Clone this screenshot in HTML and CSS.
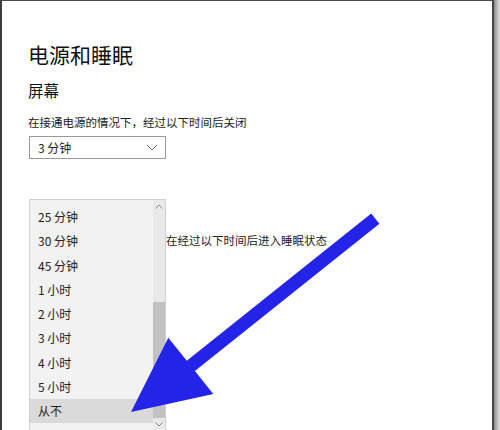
FILE: index.html
```html
<!DOCTYPE html>
<html lang="zh-CN">

<head>
    <meta charset="UTF-8">
    <meta name="viewport" content="width=device-width, initial-scale=1.0">
    <title>电源和睡眠</title>
    <link rel="stylesheet" href="styles.css">
</head>

<body>

    <div class="screen">
        <!-- Settings window -->
        <div class="window">
            <h1 class="page-title">电源和睡眠</h1>

            <!-- Screen section -->
            <h2 class="section-title">屏幕</h2>
            <div class="field-label">在接通电源的情况下，经过以下时间后关闭</div>
            <div class="combo">
                <span>3 分钟</span>
                <svg class="chevron" width="12" height="8" viewBox="0 0 12 8">
                    <polyline points="1,1 6,6 11,1" fill="none" stroke="#666" stroke-width="1" />
                </svg>
            </div>

            <!-- Sleep section (mostly under the open list) -->
            <div class="field-label sleep-label"><span class="covered">在接通电源的情况下，电脑</span>在经过以下时间后进入睡眠状态</div>

            <!-- Open dropdown list -->
            <div class="dropdown">
                <ul class="options">
                    <li>25 分钟</li>
                    <li>30 分钟</li>
                    <li>45 分钟</li>
                    <li>1 小时</li>
                    <li>2 小时</li>
                    <li>3 小时</li>
                    <li>4 小时</li>
                    <li>5 小时</li>
                    <li class="selected">从不</li>
                </ul>
                <div class="scrollbar">
                    <svg class="scroll-arrow up" width="8" height="5" viewBox="0 0 8 5">
                        <polyline points="0.5,4.5 4,1 7.5,4.5" fill="none" stroke="#888" stroke-width="1" />
                    </svg>
                    <div class="scroll-thumb"></div>
                    <svg class="scroll-arrow down" width="8" height="5" viewBox="0 0 8 5">
                        <polyline points="0.5,0.5 4,4 7.5,0.5" fill="none" stroke="#888" stroke-width="1" />
                    </svg>
                </div>
            </div>

            <!-- Pointer arrow drawn over the list -->
            <svg class="pointer" width="500" height="430" viewBox="0 0 500 430">
                <polygon points="131,412 168.3,337.7 186.8,360.7 371.2,213.5 379.4,223.7 194.9,370.9 213.3,393.9" fill="#2424e8" />
            </svg>
        </div>
        <div class="window-shadow"></div>
    </div>

</body>

</html>
```

FILE: styles.css
```css
body {
    margin: 0;
    padding: 0;
    background-color: #fff;
    font-family: "Noto Sans CJK SC", "Noto Sans", sans-serif;
    color: #1a1a1a;
    overflow: hidden;
}

.screen {
    display: flex;
    width: 500px;
    height: 430px;
}

/* Window frame */
.window {
    width: 494px;
    height: 430px;
    border-left: 2px solid #3c3c3c;
    border-top: 1px solid #4a4a4a;
    border-right: 2px solid #454545;
    background-color: #fff;
    padding: 0 0 0 26px;
    box-sizing: border-box;
}

.window-shadow {
    flex: 1;
    background: linear-gradient(to right, #8a8a8a, #b8b8b8 50%, #e4e4e4);
}

.page-title {
    margin: 38px 0 0 0;
    font-size: 21px;
    font-weight: normal;
    line-height: 30px;
    color: #111;
}

.section-title {
    margin: 10px 0 0 0;
    font-size: 15.5px;
    font-weight: normal;
    line-height: 22px;
    color: #111;
}

.field-label {
    margin-top: 12px;
    font-size: 11.5px;
    line-height: 18px;
    color: #222;
    white-space: nowrap;
}

.sleep-label {
    margin-top: 72px;
}

/* the start of this label sits behind the open list */
.covered {
    visibility: hidden;
}

.combo {
    margin: 5px 0 0 1px;
    width: 137px;
    height: 23px;
    border: 1px solid #9a9a9a;
    box-sizing: border-box;
    display: flex;
    align-items: center;
    justify-content: space-between;
    padding: 0 7px 0 8px;
    font-size: 12px;
    color: #222;
}

.chevron {
    display: block;
}

/* Dropdown list popup */
.dropdown {
    position: absolute;
    left: 29px;
    top: 199px;
    width: 137px;
    height: 240px;
    background-color: #f2f2f2;
    border: 1px solid #d0d0d0;
    box-sizing: border-box;
    display: flex;
}

.options {
    list-style: none;
    margin: 0;
    padding: 5px 0 0 0;
    flex: 1;
}

.options li {
    height: 24.25px;
    line-height: 24.25px;
    padding-left: 8px;
    font-size: 12px;
    color: #222;
}

.options li.selected {
    background-color: #dadada;
}

.scrollbar {
    width: 12px;
    background-color: #e9e9e9;
    display: flex;
    flex-direction: column;
    align-items: center;
    padding-top: 4px;
}

.scroll-arrow {
    display: block;
}

.scroll-arrow.up {
    margin-bottom: 93px;
}

.scroll-thumb {
    width: 12px;
    height: 116px;
    background-color: #c2c2c2;
}

.scroll-arrow.down {
    margin-top: 4px;
}

.pointer {
    position: absolute;
    left: 0;
    top: 0;
}
```
